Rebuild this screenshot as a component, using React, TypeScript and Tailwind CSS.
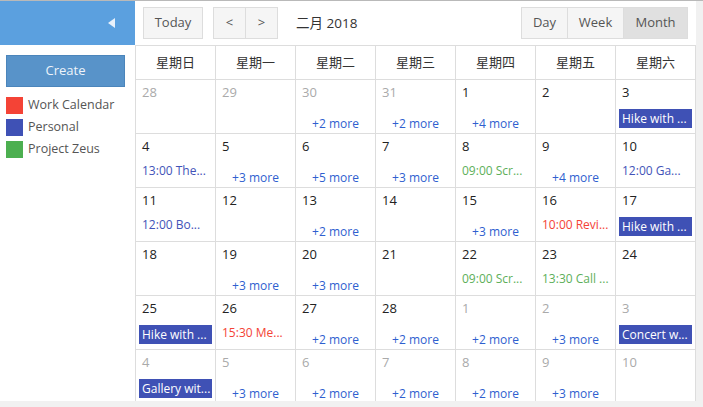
import React from "react";

type Ev =
  | { kind: "block"; text: string }
  | { kind: "timed"; text: string; color: string }
  | { kind: "more"; count: number };

type Day = { n: number; other?: boolean; ev?: Ev };

const WEEKDAYS = ["星期日", "星期一", "星期二", "星期三", "星期四", "星期五", "星期六"];

const INDIGO = "text-[#4253b8]";
const GREEN = "text-[#5daf5a]";
const RED = "text-[#f44336]";

const more = (count: number): Ev => ({ kind: "more", count });
const timed = (text: string, color: string): Ev => ({ kind: "timed", text, color });
const block = (text: string): Ev => ({ kind: "block", text });

// titles are already shortened the way the calendar widget prints them
const WEEKS: Day[][] = [
  [
    { n: 28, other: true },
    { n: 29, other: true },
    { n: 30, other: true, ev: more(2) },
    { n: 31, other: true, ev: more(2) },
    { n: 1, ev: more(4) },
    { n: 2 },
    { n: 3, ev: block("Hike with ...") },
  ],
  [
    { n: 4, ev: timed("13:00 The...", INDIGO) },
    { n: 5, ev: more(3) },
    { n: 6, ev: more(5) },
    { n: 7, ev: more(3) },
    { n: 8, ev: timed("09:00 Scr...", GREEN) },
    { n: 9, ev: more(4) },
    { n: 10, ev: timed("12:00 Ga...", INDIGO) },
  ],
  [
    { n: 11, ev: timed("12:00 Bo...", INDIGO) },
    { n: 12 },
    { n: 13, ev: more(2) },
    { n: 14 },
    { n: 15, ev: more(3) },
    { n: 16, ev: timed("10:00 Revi...", RED) },
    { n: 17, ev: block("Hike with ...") },
  ],
  [
    { n: 18 },
    { n: 19, ev: more(3) },
    { n: 20, ev: more(3) },
    { n: 21 },
    { n: 22, ev: timed("09:00 Scr...", GREEN) },
    { n: 23, ev: timed("13:30 Call ...", GREEN) },
    { n: 24 },
  ],
  [
    { n: 25, ev: block("Hike with ...") },
    { n: 26, ev: timed("15:30 Me...", RED) },
    { n: 27, ev: more(2) },
    { n: 28, ev: more(2) },
    { n: 1, other: true, ev: more(2) },
    { n: 2, other: true, ev: more(3) },
    { n: 3, other: true, ev: block("Concert w...") },
  ],
  [
    { n: 4, other: true, ev: block("Gallery wit...") },
    { n: 5, other: true, ev: more(3) },
    { n: 6, other: true, ev: more(2) },
    { n: 7, other: true, ev: more(2) },
    { n: 8, other: true, ev: more(2) },
    { n: 9, other: true, ev: more(3) },
    { n: 10, other: true },
  ],
];

function DayCell({ day }: { day: Day }) {
  const ev = day.ev;
  return (
    <div className="h-[54px] w-[80px] shrink-0 overflow-hidden border-b border-r border-[#dddddd]">
      <div className={`pl-[6px] pt-[3px] text-[13px] leading-[18px] ${day.other ? "text-[#aaaaaa]" : "text-[#222222]"}`}>
        {day.n}
      </div>
      {ev?.kind === "block" && (
        <div className="mx-[3px] mt-[8px] h-[19px] overflow-hidden whitespace-nowrap bg-[#3f51b5] px-[3px] text-[12px] leading-[19px] text-white">
          {ev.text}
        </div>
      )}
      {ev?.kind === "timed" && (
        <div className={`mt-[8px] overflow-hidden whitespace-nowrap pl-[6px] text-[12px] leading-[16px] ${ev.color}`}>
          {ev.text}
        </div>
      )}
      {ev?.kind === "more" && (
        <div className="mt-[15px] text-center text-[12px] leading-[16px] text-[#2f5fcf]">+{ev.count} more</div>
      )}
    </div>
  );
}

function ToolButton({ children, active, className = "" }: { children: React.ReactNode; active?: boolean; className?: string }) {
  return (
    <div
      className={`flex h-[32px] items-center justify-center border border-[#dddddd] text-[13px] text-[#555555] ${
        active ? "bg-[#e0e0e0]" : "bg-[#f5f5f5]"
      } ${className}`}
    >
      {children}
    </div>
  );
}

export default function App() {
  return (
    <div className="h-[407px] w-[703px] overflow-hidden border-t border-[#b9b9b9] bg-[#f1f1f1] font-['Open_Sans','Noto_Sans_CJK_SC',sans-serif]">
      <div className="flex h-[400px] w-[696px] overflow-hidden bg-white">
        {/* sidebar */}
        <aside className="w-[135px] shrink-0">
          <div className="flex h-[44px] items-center justify-end bg-[#5ba0df] pr-[20px]">
            <svg width="7" height="10" viewBox="0 0 7 10">
              <polygon points="7,0 7,10 0,5" fill="#e8f1fb" />
            </svg>
          </div>
          <div className="px-[6px] pt-[10px]">
            <button className="h-[32px] w-[119px] border border-[#4b85bb] bg-[#5893c9] text-[13px] text-[#eef4fa]">
              Create
            </button>
            <div className="mt-[10px] flex flex-col gap-[5px]">
              {[
                ["Work Calendar", "bg-[#f44336]"],
                ["Personal", "bg-[#3f51b5]"],
                ["Project Zeus", "bg-[#4caf50]"],
              ].map(([label, color]) => (
                <div key={label} className="flex h-[17px] items-center gap-[5px]">
                  <span className={`h-[17px] w-[17px] ${color}`} />
                  <span className="text-[12.5px] text-[#555555]">{label}</span>
                </div>
              ))}
            </div>
          </div>
        </aside>

        {/* calendar */}
        <main className="flex w-[561px] shrink-0 flex-col">
          <div className="flex h-[44px] items-center px-[8px]">
            <ToolButton className="w-[60px]">Today</ToolButton>
            <div className="ml-[10px] flex">
              <ToolButton className="w-[33px]">&lt;</ToolButton>
              <ToolButton className="-ml-px w-[33px]">&gt;</ToolButton>
            </div>
            <div className="ml-[18px] text-[13.5px] text-[#333333]">二月 2018</div>
            <div className="ml-auto flex">
              <ToolButton className="w-[47px]">Day</ToolButton>
              <ToolButton className="-ml-px w-[57px]">Week</ToolButton>
              <ToolButton active className="-ml-px w-[65px]">
                Month
              </ToolButton>
            </div>
          </div>
          <div className="flex-1 overflow-hidden border-l border-t border-[#dddddd]">
            <div className="flex">
              {WEEKDAYS.map((w) => (
                <div
                  key={w}
                  className="flex h-[34px] w-[80px] shrink-0 items-center justify-center border-b border-r border-[#dddddd] text-[13px] text-[#333333]"
                >
                  {w}
                </div>
              ))}
            </div>
            {WEEKS.map((week, i) => (
              <div key={i} className="flex">
                {week.map((d, j) => (
                  <DayCell key={j} day={d} />
                ))}
              </div>
            ))}
          </div>
        </main>
      </div>
    </div>
  );
}
